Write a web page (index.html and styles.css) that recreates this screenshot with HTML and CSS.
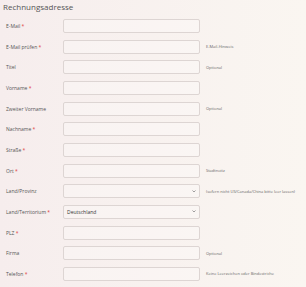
FILE: index.html
```html
<!DOCTYPE html>
<html lang="de">
<head>
    <meta charset="UTF-8">
    <meta name="viewport" content="width=device-width, initial-scale=1.0">
    <title>Rechnungsadresse</title>
    <link rel="stylesheet" href="styles.css">
</head>
<body>
    <div class="page">
        <h1>Rechnungsadresse</h1>
        <form class="address-form">
            <label>E-Mail <span class="req">*</span></label>
            <input type="email">
            <span class="hint"></span>

            <label>E-Mail prüfen <span class="req">*</span></label>
            <input type="email">
            <span class="hint">E-Mail-Hinweis</span>

            <label>Titel</label>
            <input type="text">
            <span class="hint">Optional</span>

            <label>Vorname <span class="req">*</span></label>
            <input type="text">
            <span class="hint"></span>

            <label>Zweiter Vorname</label>
            <input type="text">
            <span class="hint">Optional</span>

            <label>Nachname <span class="req">*</span></label>
            <input type="text">
            <span class="hint"></span>

            <label>Straße <span class="req">*</span></label>
            <input type="text">
            <span class="hint"></span>

            <label>Ort <span class="req">*</span></label>
            <input type="text">
            <span class="hint">Stadtnotiz</span>

            <label>Land/Provinz</label>
            <div class="select">
                <span></span>
                <svg width="4" height="3" viewBox="0 0 4 3"><path d="M0.5 0.5 L2 2 L3.5 0.5" fill="none" stroke="#777" stroke-width="0.7"/></svg>
            </div>
            <span class="hint">(sofern nicht US/Canada/China bitte leer lassen)</span>

            <label>Land/Territorium <span class="req">*</span></label>
            <div class="select">
                <span>Deutschland</span>
                <svg width="4" height="3" viewBox="0 0 4 3"><path d="M0.5 0.5 L2 2 L3.5 0.5" fill="none" stroke="#777" stroke-width="0.7"/></svg>
            </div>
            <span class="hint"></span>

            <label>PLZ <span class="req">*</span></label>
            <input type="text">
            <span class="hint"></span>

            <label>Firma</label>
            <input type="text">
            <span class="hint">Optional</span>

            <label>Telefon <span class="req">*</span></label>
            <input type="tel">
            <span class="hint">Keine Leerzeichen oder Bindestriche</span>
        </form>
    </div>
</body>
</html>
```

FILE: styles.css
```css
body {
    margin: 0;
    height: 287px;
    font-family: 'Open Sans', 'Liberation Sans', sans-serif;
    background: linear-gradient(to right, #f6eded, #faf6f1);
    color: #555;
    overflow: hidden;
}
.page {
    padding: 1px 0 0 3px;
}
h1 {
    margin: 0;
    font-size: 8px;
    line-height: 12px;
    font-weight: normal;
    color: #555;
}
.address-form {
    display: grid;
    grid-template-columns: 51px 137px auto;
    grid-auto-rows: 14px;
    row-gap: 6.67px;
    column-gap: 6px;
    align-items: center;
    padding: 6px 0 0 3px;
}
.address-form label {
    font-size: 5px;
    color: #555;
}
.req {
    color: #e03a3a;
}
.address-form input,
.select {
    box-sizing: border-box;
    height: 14px;
    width: 137px;
    margin: 0;
    border: 1px solid #ddd5d3;
    border-radius: 2px;
    background: rgba(255, 255, 255, 0.25);
}
.select {
    display: flex;
    justify-content: space-between;
    align-items: center;
    padding: 0 3px 0 3px;
    font-size: 5px;
    color: #333;
}
.hint {
    font-size: 4px;
    color: #666;
}
```
